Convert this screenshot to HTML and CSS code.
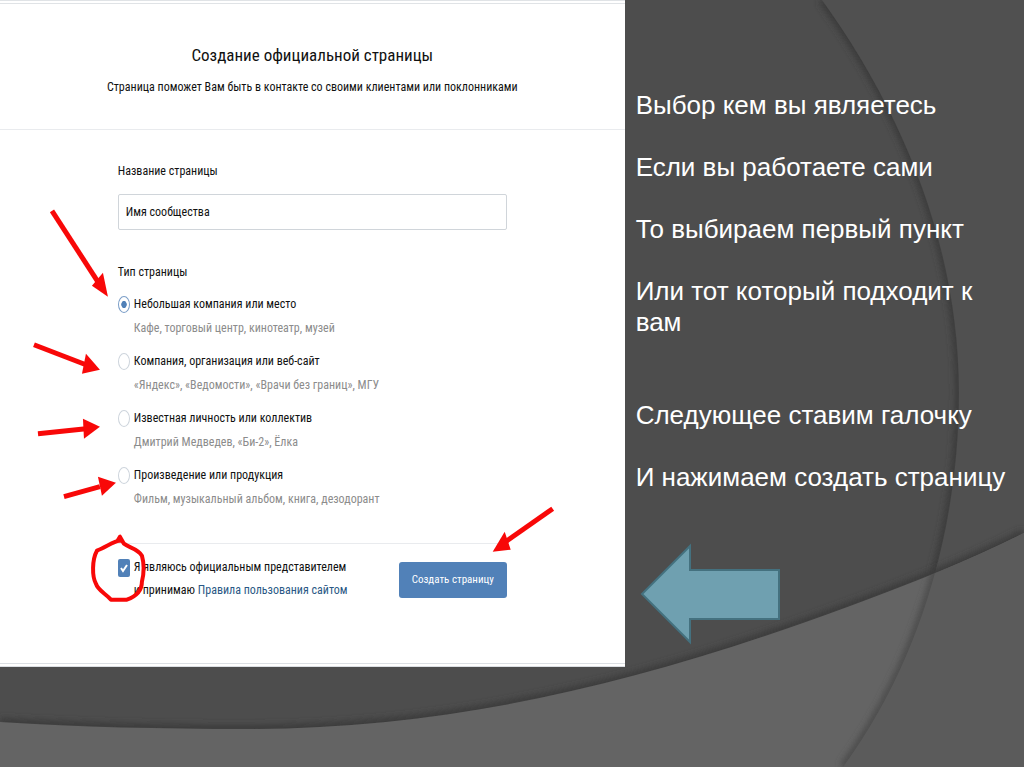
FILE: index.html
```
<!DOCTYPE html>
<html lang="ru">
<head>
    <meta charset="UTF-8">
    <meta name="viewport" content="width=device-width, initial-scale=1.0">
    <title>Создание официальной страницы</title>
    <link rel="stylesheet" href="styles.css">
</head>
<body>
    <svg class="backdrop" viewBox="0 0 1024 767" preserveAspectRatio="none" aria-hidden="true">
        <defs>
            <filter id="soft" x="-10%" y="-10%" width="120%" height="120%">
                <feGaussianBlur stdDeviation="3"/>
            </filter>
            <clipPath id="hill">
                <path d="M0 722C80 727 160 729 245 729C480 729 690 671 938 572Q984 553 1024 533V767H0Z"/>
            </clipPath>
        </defs>
        <path class="shade" d="M822 0C905 115 959 250 959 393C959 530 918 665 843 767"/>
        <path class="side" d="M822 0C905 115 959 250 959 393C959 530 918 665 843 767H1024V0Z"/>
        <path class="shade" d="M0 722C80 727 160 729 245 729C480 729 690 671 938 572Q984 553 1024 533"/>
        <path class="hill" d="M0 722C80 727 160 729 245 729C480 729 690 671 938 572Q984 553 1024 533V767H0Z"/>
        <g clip-path="url(#hill)">
            <path class="shade light" d="M959 393C959 530 918 665 843 767"/>
            <path class="overlap" d="M959 393C959 530 918 665 843 767H1024V393Z"/>
        </g>
    </svg>

    <div class="slide">
        <main class="card">
            <header class="card-header">
                <h1>Создание официальной страницы</h1>
                <p>Страница поможет Вам быть в контакте со своими клиентами или поклонниками</p>
            </header>

            <form id="pageForm">
                <label class="field-label" for="pageName">Название страницы</label>
                <input type="text" id="pageName" name="pageName" value="Имя сообщества">

                <fieldset>
                    <legend>Тип страницы</legend>
                    <div class="option">
                        <input type="radio" id="small" name="type" checked>
                        <label for="small">Небольшая компания или место<span>Кафе, торговый центр, кинотеатр, музей</span></label>
                    </div>
                    <div class="option">
                        <input type="radio" id="company" name="type">
                        <label for="company">Компания, организация или веб-сайт<span>«Яндекс», «Ведомости», «Врачи без границ», МГУ</span></label>
                    </div>
                    <div class="option">
                        <input type="radio" id="person" name="type">
                        <label for="person">Известная личность или коллектив<span>Дмитрий Медведев, «Би-2», Ёлка</span></label>
                    </div>
                    <div class="option">
                        <input type="radio" id="product" name="type">
                        <label for="product">Произведение или продукция<span>Фильм, музыкальный альбом, книга, дезодорант</span></label>
                    </div>
                </fieldset>

                <div class="form-footer">
                    <div class="agree">
                        <span class="tick">
                            <input type="checkbox" id="agree" name="agree" checked>
                            <svg viewBox="0 0 12 18" aria-hidden="true"><path d="M3 9L5 12L9 6"/></svg>
                        </span>
                        <label for="agree">Я являюсь официальным представителем<br>и принимаю <a href="#">Правила пользования сайтом</a></label>
                    </div>
                    <button type="button">Создать страницу</button>
                </div>
            </form>

            <!-- red pointers drawn over the form -->
            <svg class="marks" viewBox="0 0 625 667" aria-hidden="true">
                <path class="line" d="M52 211L98 282"/>
                <path class="head" d="M108 297L92 286L103 273Z"/>
                <path class="line" d="M34 345L86 365"/>
                <path class="head" d="M100 370L82 374L86 354Z"/>
                <path class="line" d="M38 434L86 429"/>
                <path class="head" d="M100 427L84 439L83 419Z"/>
                <path class="line" d="M64 497L100 487"/>
                <path class="head" d="M116 483L102 496L98 477Z"/>
                <path class="line" d="M553 509L506 542"/>
                <path class="head" d="M493 552L505 532L511 550Z"/>
                <path class="line ring" d="M122 541C116 540 107 547 97 551C92 560 92 577 96 584C98 591 106 594 111 600L127 600C135 597 142 591 142 582C144 574 144 563 142 556C138 549 129 548 124 544L120 537L117 542"/>
            </svg>
        </main>

        <aside class="notes">
            <p>Выбор кем вы являетесь</p>
            <p>Если вы работаете сами</p>
            <p>То выбираем первый пункт</p>
            <p>Или тот который подходит к вам</p>
            <p class="next">Следующее ставим галочку</p>
            <p>И нажимаем создать страницу</p>
            <svg class="big-arrow" viewBox="0 0 140 102" aria-hidden="true">
                <path d="M2 51L50 3V27H139V76H50V99Z"/>
            </svg>
        </aside>
    </div>
</body>
</html>
```
FILE: styles.css
```
* {
    box-sizing: border-box;
}
body {
    margin: 0;
    min-height: 100vh;
    position: relative;
    background-color: #4d4d4d;
    font-family: "Liberation Sans", Arial, sans-serif;
}
h1, p {
    margin: 0;
}

/* background curves */
.backdrop {
    position: absolute;
    top: 0;
    left: 0;
    width: 100%;
    height: 100%;
}
.shade {
    fill: none;
    stroke: #3a3a3a;
    stroke-width: 8;
    filter: url(#soft);
}
.light {
    stroke: #4c4c4c;
}
.side {
    fill: #505050;
}
.hill {
    fill: #646464;
}
.overlap {
    fill: #5b5b5b;
}

.slide {
    position: relative;
    display: flex;
    align-items: flex-start;
}

/* form card */
.card {
    position: relative;
    width: 61%;
    padding-bottom: 61px;
    background-color: #fff;
    border-top: 4px double #e0e3e6;
    border-bottom: 4px double #dcdfe3;
    color: #111;
    font-family: "Roboto Condensed", Roboto, sans-serif;
    font-size: 12px;
    line-height: 24px;
}
.card-header {
    height: 126px;
    padding-top: 36px;
    border-bottom: 1px solid #e9ebee;
    text-align: center;
}
.card-header h1 {
    font-size: 17px;
    font-weight: normal;
    line-height: 30px;
    margin-bottom: 5px;
}
#pageForm {
    max-width: 389px;
    margin: 0 auto;
    padding-top: 29px;
}
.field-label {
    display: block;
    margin-bottom: 11px;
}
#pageName {
    display: block;
    width: 100%;
    height: 36px;
    padding: 0 7px;
    border: 1px solid #d0d5da;
    border-radius: 2px;
    color: #111;
    font: inherit;
}
fieldset {
    margin: 0;
    padding: 30px 0 0;
    border: 0;
}
legend {
    float: left;
    width: 100%;
    padding: 0;
    margin-bottom: 8px;
}
.option {
    clear: both;
    display: flex;
    gap: 4px;
    margin-bottom: 9px;
}
.option span {
    display: block;
    color: #8c8c8c;
}
.option input {
    appearance: none;
    width: 12px;
    height: 17px;
    margin: 4px 0;
    border: 1px solid #cdd4dc;
    border-radius: 50%;
}
.option input:checked {
    border-color: #7a9dc7;
    background: radial-gradient(ellipse 3px 4px, #5181b8 80%, #fff);
}
.form-footer {
    display: flex;
    justify-content: space-between;
    align-items: flex-start;
    margin-top: 23px;
    padding-top: 12px;
    border-top: 1px solid #e9ebee;
}
.agree {
    display: flex;
    gap: 4px;
    line-height: 23px;
}
.tick {
    position: relative;
    width: 12px;
    height: 18px;
    margin-top: 3px;
}
.tick input {
    appearance: none;
    display: block;
    width: 12px;
    height: 18px;
    margin: 0;
    border-radius: 2px;
    background-color: #5181b8;
}
.tick svg {
    position: absolute;
    top: 0;
    left: 0;
    width: 12px;
    height: 18px;
    fill: none;
    stroke: #fff;
    stroke-width: 2;
    pointer-events: none;
}
a {
    color: #2a5885;
    text-decoration: none;
}
button {
    width: 108px;
    height: 36px;
    margin-top: 6px;
    padding: 0;
    border: 0;
    border-radius: 3px;
    background-color: #5181b8;
    color: #fff;
    font: inherit;
    font-size: 11px;
    cursor: pointer;
}
.marks {
    position: absolute;
    top: -4px;
    left: 0;
    width: 100%;
    pointer-events: none;
}
.line {
    fill: none;
    stroke: #f80808;
    stroke-width: 5;
}
.ring {
    stroke-width: 4;
    stroke-linejoin: round;
}
.head {
    fill: #f80808;
}

/* right column */
.notes {
    flex: 1;
    padding: 90px 4px 0 11px;
    color: #fff;
    font-size: 26px;
    line-height: 31px;
}
.notes p {
    margin-bottom: 31px;
}
.notes .next {
    margin-top: 62px;
}
.big-arrow {
    display: block;
    width: 140px;
    margin: 50px 0 0 4px;
    fill: #6fa0b0;
    stroke: #44717f;
    stroke-width: 2;
}
```
